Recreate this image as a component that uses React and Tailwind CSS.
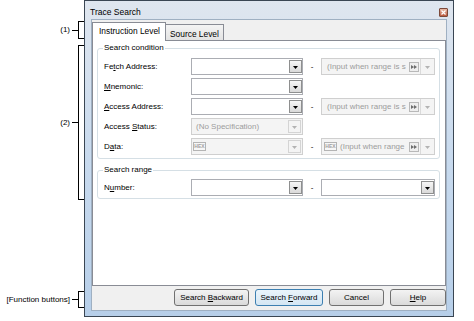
import React from 'react';

function Arrow({ color }) {
    return (
        <svg width="5" height="3" viewBox="0 0 5 3">
            <path d="M0 0H5L2.5 3Z" fill={color} />
        </svg>
    );
}

function DropButton() {
    return (
        <span className="w-[13px] h-[13px] border border-[#8e8f8f] bg-gradient-to-b from-[#f6f6f6] to-[#d9d9d9] flex items-center justify-center pt-[2px]">
            <Arrow color="#000" />
        </span>
    );
}

function Hex() {
    return (
        <span className="w-[13px] h-[9px] border border-[#b4b4b4] bg-[#f7f7f7] flex items-center justify-center text-[5px] leading-none font-bold text-[#a0a0a0] shrink-0">
            HEX
        </span>
    );
}

function Combo({ width = 'w-[112px]' }) {
    return (
        <div className={`${width} h-[17px] border border-[#abadb3] bg-white flex items-center justify-end`}>
            <DropButton />
        </div>
    );
}

function DisabledCombo({ text, hex }) {
    return (
        <div className="w-[112px] h-[17px] border border-[#cfcfcf] bg-[#f4f4f4] flex items-center pl-[1px] text-[#9c9c9c]">
            {hex && <Hex />}
            <span className="flex-1 pl-[3px] whitespace-nowrap">{text}</span>
            <span className="w-[13px] h-[13px] border border-[#d4d4d4] bg-[#f4f4f4] flex items-center justify-center pt-[2px] mr-[1px]">
                <Arrow color="#b3b3b3" />
            </span>
        </div>
    );
}

function RangeCombo({ text, hex }) {
    return (
        <div className="w-[114px] h-[17px] border border-[#cfcfcf] bg-[#f4f4f4] flex items-center pl-[2px] text-[#9c9c9c]">
            {hex && <Hex />}
            <span className="flex-1 pl-[3px] whitespace-nowrap">{text}</span>
            <span className="w-[10px] h-[10px] border border-[#b8b8b8] bg-[#eeeeee] flex items-center justify-center shrink-0">
                <svg width="6" height="4" viewBox="0 0 6 4">
                    <path d="M0 0L3 2L0 4Z M3 0L6 2L3 4Z" fill="#6d6d6d" />
                </svg>
            </span>
            <span className="w-[14px] h-full border-l border-[#dadada] ml-[1px] flex items-center justify-center pt-[2px]">
                <Arrow color="#b3b3b3" />
            </span>
        </div>
    );
}

function Row({ label, children }) {
    return (
        <div className="flex items-center h-[17px]">
            <span className="w-[87px]">{label}</span>
            {children}
        </div>
    );
}

function Dash() {
    return <span className="w-[18px] text-center">-</span>;
}

function Button({ children, width, primary }) {
    const border = primary ? 'border-[#3c7fb1] from-[#eaf4fb] to-[#d4e6f3]' : 'border-[#707070] from-[#f3f3f3] to-[#dadada]';
    return (
        <button className={`${width} h-[17px] rounded-[3px] border bg-gradient-to-b ${border} text-black leading-none`}>
            {children}
        </button>
    );
}

function Bracket({ height, label }) {
    return (
        <div className={`${height} flex items-center justify-end`}>
            <span className="mr-[2px] whitespace-nowrap">{label}</span>
            <span className="w-[6px] h-px bg-black" />
            <span className="w-[6px] h-full border-l border-y border-black" />
        </div>
    );
}

export default function App() {
    return (
        <div className="w-[474px] h-[321px] bg-white flex text-[8px] leading-[10px] text-black font-['Liberation_Sans',Arial,sans-serif] overflow-hidden">
            {/* Callouts */}
            <div className="w-[84px] flex flex-col pt-[21px]">
                <Bracket height="h-[18px]" label="(1)" />
                <div className="mt-[6px]">
                    <Bracket height="h-[155px]" label="(2)" />
                </div>
                <div className="mt-[91px]">
                    <Bracket height="h-[17px]" label="[Function buttons]" />
                </div>
            </div>

            {/* Dialog window */}
            <div className="w-[370px] h-[317px] border border-[#3a4653] bg-gradient-to-b from-[#dfe6ef] via-[#c8daee] to-[#b7cfe9] flex flex-col">
                <div className="h-[18px] flex items-center justify-between pl-[5px] pr-[5px] pt-[4px]">
                    <span className="text-[8.5px]">Trace Search</span>
                    <span className="w-[9px] h-[9px] border border-[#7c4a3a] rounded-[1px] bg-gradient-to-b from-[#e9b9a4] to-[#b95a3f] flex items-center justify-center mt-[1px]">
                        <svg width="5" height="5" viewBox="0 0 5 5">
                            <path d="M0.5 0.5L4.5 4.5M4.5 0.5L0.5 4.5" stroke="#fff" strokeWidth="1.2" />
                        </svg>
                    </span>
                </div>

                <div className="flex-1 mx-[6px] mb-[5px] border border-[#9fb0c2] bg-[#f0f0f0] flex flex-col pt-[2px]">
                    {/* Tabs */}
                    <div className="flex items-end h-[19px] -mb-px relative z-10">
                        <div className="w-[74px] h-[19px] border-t border-x border-[#898c95] bg-white pl-[6px] pt-[3px] text-[8.4px]">
                            Instruction Level
                        </div>
                        <div className="w-[58px] h-[17px] border-t border-r border-b border-[#898c95] bg-gradient-to-b from-[#f4f4f4] to-[#e3e3e3] pl-[4px] pt-[4px] text-[8.4px]">
                            Source Level
                        </div>
                    </div>

                    {/* Tab page */}
                    <div className="h-[246px] border border-[#898c95] bg-white pl-[4px] pt-[2px] flex flex-col">
                        <fieldset className="w-[343px] border border-[#d5dfe5] rounded-[3px] pl-[6px] pb-[3px]">
                            <legend className="ml-[-1px] px-[1px] leading-[10px]">Search condition</legend>
                            <div className="flex flex-col gap-[3px] mt-[5px]">
                                <Row label={<>Fe<u>t</u>ch Address:</>}>
                                    <Combo />
                                    <Dash />
                                    <RangeCombo text="(Input when range is s" />
                                </Row>
                                <Row label={<><u>M</u>nemonic:</>}>
                                    <Combo />
                                </Row>
                                <Row label={<><u>A</u>ccess Address:</>}>
                                    <Combo />
                                    <Dash />
                                    <RangeCombo text="(Input when range is s" />
                                </Row>
                                <Row label={<>Access <u>S</u>tatus:</>}>
                                    <DisabledCombo text="(No Specification)" />
                                </Row>
                                <Row label={<>D<u>a</u>ta:</>}>
                                    <DisabledCombo text="" hex />
                                    <Dash />
                                    <RangeCombo text="(Input when range" hex />
                                </Row>
                            </div>
                        </fieldset>

                        <fieldset className="w-[343px] mt-[6px] border border-[#d5dfe5] rounded-[3px] pl-[6px] pb-[2px]">
                            <legend className="ml-[-1px] px-[1px] leading-[10px]">Search range</legend>
                            <div className="mt-[4px]">
                                <Row label={<>N<u>u</u>mber:</>}>
                                    <Combo />
                                    <Dash />
                                    <Combo width="w-[114px]" />
                                </Row>
                            </div>
                        </fieldset>
                    </div>

                    {/* Function buttons */}
                    <div className="flex justify-end gap-[6px] mt-[3px]">
                        <Button width="w-[75px]">Search <u>B</u>ackward</Button>
                        <Button width="w-[68px]" primary>Search <u>F</u>orward</Button>
                        <Button width="w-[55px]">Cancel</Button>
                        <Button width="w-[56px]"><u>H</u>elp</Button>
                    </div>
                </div>
            </div>
        </div>
    );
}
